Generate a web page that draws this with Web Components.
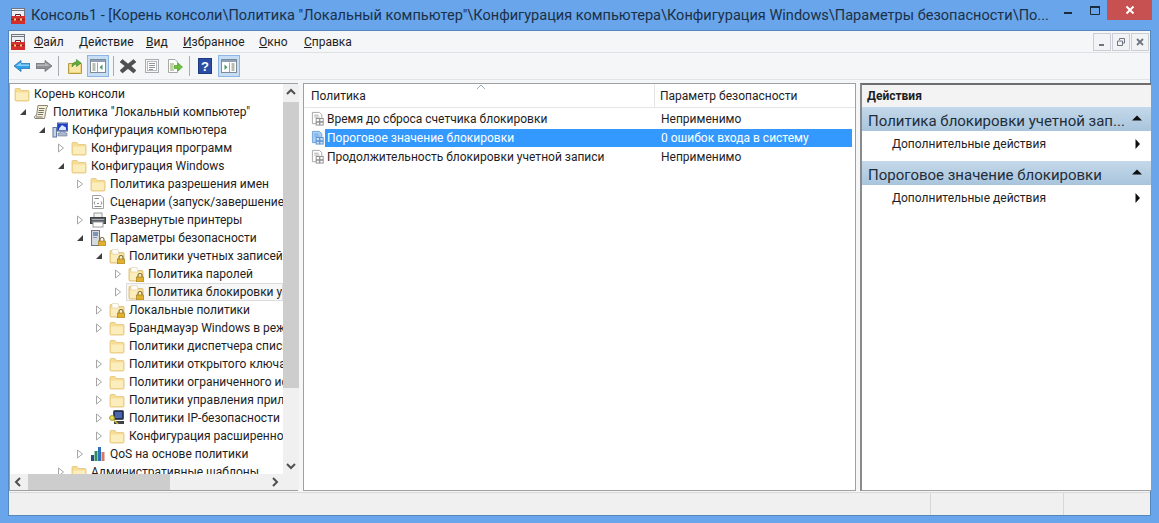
<!DOCTYPE html>
<html lang="ru">
<head>
<meta charset="utf-8">
<title>Консоль1</title>
<style>
  html, body { margin: 0; height: 100%; background: #68a5ea; overflow: hidden; }
  body { font-family: Roboto, "Open Sans", "Liberation Sans", sans-serif; font-size: 12px; color: #1e1e1e; }
</style>
</head>
<body>

<mmc-window>
  <mmc-titlebar slot="title">Консоль1 - [Корень консоли\Политика "Локальный компьютер"\Конфигурация компьютера\Конфигурация Windows\Параметры безопасности\По...</mmc-titlebar>
  <mmc-menubar slot="menu"></mmc-menubar>
  <mmc-toolbar slot="tools"></mmc-toolbar>

  <mmc-tree slot="tree">
    <tree-row level="0" icon="folder">Корень консоли</tree-row>
    <tree-row level="1" exp="open" icon="policy">Политика "Локальный компьютер"</tree-row>
    <tree-row level="2" exp="open" icon="computer">Конфигурация компьютера</tree-row>
    <tree-row level="3" exp="closed" icon="folder">Конфигурация программ</tree-row>
    <tree-row level="3" exp="open" icon="folder">Конфигурация Windows</tree-row>
    <tree-row level="4" exp="closed" icon="folder">Политика разрешения имен</tree-row>
    <tree-row level="4" icon="script">Сценарии (запуск/завершение)</tree-row>
    <tree-row level="4" exp="closed" icon="printer">Развернутые принтеры</tree-row>
    <tree-row level="4" exp="open" icon="server">Параметры безопасности</tree-row>
    <tree-row level="5" exp="open" icon="lockfolder">Политики учетных записей</tree-row>
    <tree-row level="6" exp="closed" icon="lockfolder">Политика паролей</tree-row>
    <tree-row level="6" exp="closed" icon="lockfolder" selected>Политика блокировки учетной записи</tree-row>
    <tree-row level="5" exp="closed" icon="lockfolder">Локальные политики</tree-row>
    <tree-row level="5" exp="closed" icon="folder">Брандмауэр Windows в режиме повышенной безопасности</tree-row>
    <tree-row level="5" icon="folder">Политики диспетчера списка сетей</tree-row>
    <tree-row level="5" exp="closed" icon="folder">Политики открытого ключа</tree-row>
    <tree-row level="5" exp="closed" icon="folder">Политики ограниченного использования программ</tree-row>
    <tree-row level="5" exp="closed" icon="folder">Политики управления приложениями</tree-row>
    <tree-row level="5" exp="closed" icon="ipsec">Политики IP-безопасности на "Локальный компьютер"</tree-row>
    <tree-row level="5" exp="closed" icon="folder">Конфигурация расширенной политики аудита</tree-row>
    <tree-row level="4" exp="closed" icon="qos">QoS на основе политики</tree-row>
    <tree-row level="3" exp="closed" icon="folder">Административные шаблоны</tree-row>
  </mmc-tree>

  <mmc-list slot="list">
    <list-row value="Неприменимо">Время до сброса счетчика блокировки</list-row>
    <list-row value="0 ошибок входа в систему" selected>Пороговое значение блокировки</list-row>
    <list-row value="Неприменимо">Продолжительность блокировки учетной записи</list-row>
  </mmc-list>

  <mmc-actions slot="actions">
    <action-group heading="Политика блокировки учетной зап..."></action-group>
    <action-group heading="Пороговое значение блокировки"></action-group>
  </mmc-actions>

  <mmc-status slot="status"></mmc-status>
</mmc-window>

<script>
// значки 16x16, всё нарисовано вручную
const FOLDER_BODY = `
  <path d="M1 3.5Q1 2.5 2 2.5H6L7.5 4.5H14Q15 4.5 15 5.5V14Q15 15 14 15H2Q1 15 1 14Z" fill="#f7dc93" stroke="#e2c47c" stroke-width=".8"/>
  <path d="M2 6.5H14V14H2Z" fill="#fcedbd"/>`;

const LOCK = `
  <path d="M10 11V9.5a2 2 0 0 1 4 0V11" fill="none" stroke="#7b6a35" stroke-width="1.1"/>
  <rect x="8.5" y="11" width="7" height="5" fill="#e2b02c" stroke="#94741a" stroke-width=".6"/>`;

const ICONS = {
  folder: FOLDER_BODY,
  lockfolder: `
    <path d="M1 3.5Q1 2.5 2 2.5H6L7.5 4.5H14Q15 4.5 15 5.5V14Q15 15 14 15H2Q1 15 1 14Z" fill="#f7dc93" stroke="#d8b96e" stroke-width=".8"/>
    <path d="M3 1.5H9L10 6H3Z" fill="#fffdf5" stroke="#cfc6a8" stroke-width=".5"/>
    <path d="M2 6.5H14V14H2Z" fill="#fcedbd"/>` + LOCK,
  policy: `
    <path d="M5 1.5H14.5Q15 3.5 13.5 3.5L11.5 14.5H2Q.5 13 2.5 11.5H3.5Z" fill="#f6f0d8" stroke="#8b8674"/>
    <path d="M6 4.5H11.5M5.6 6.5H11M5.2 8.5H10.6M4.8 10.5H10M3 13H9.5" stroke="#77766c"/>`,
  computer: `
    <rect x="5.5" y="1" width="10" height="8" fill="#fff" stroke="#53617f"/>
    <path d="M6 1.5H15V8.5H6Z" fill="#1c3fc4"/>
    <path d="M7 6.5L10 3 14 5.5V8H7Z" fill="#dce6fa"/>
    <rect x="1" y="5.5" width="3.5" height="9.5" fill="#c9d2df" stroke="#5f78a0"/>
    <path d="M8 9.5H13V11H15V14H6V11H8Z" fill="#a9b8cc" stroke="#6a7890" stroke-width=".6"/>`,
  script: `
    <path d="M2.5 1.5H11L13.5 4V14.5H2.5Z" fill="#fff" stroke="#a3a3a3"/>
    <path d="M4.5 4.5H9M5 7.5L4 9 5 10.5M11 7.5L12 9 11 10.5M7 9.5H9M4.5 12.5H11.5" stroke="#8c8c8c" fill="none"/>`,
  printer: `
    <rect x="4" y="1" width="8" height="5" fill="#f3f3f3" stroke="#9b9b9b"/>
    <rect x="0.5" y="5.5" width="15" height="6" fill="#5a5f66" stroke="#3c4045"/>
    <rect x="3" y="10" width="10" height="5" fill="#fff" stroke="#9b9b9b"/>
    <path d="M2 7.5H14" stroke="#a9adb3"/>`,
  server: `
    <rect x="1.5" y="0.5" width="8" height="15" fill="#d5dae0" stroke="#6c7683"/>
    <path d="M3 3H8M3 5H8" stroke="#2f4f86"/>
    <path d="M3 7.5H7" stroke="#8d97a3"/>` + LOCK,
  ipsec: `
    <rect x="4.5" y="0.5" width="10" height="9" rx="1" fill="#22305e" stroke="#4b4f58"/>
    <rect x="6" y="2" width="7" height="6" fill="#4a64a8"/>
    <path d="M5 11H15V14H5Z" fill="#3f4248"/>
    <circle cx="3" cy="8" r="2.4" fill="#e9dd52" stroke="#a59b2d"/>
    <path d="M4 9.5L9 14" stroke="#c8bb36" stroke-width="1.6"/>`,
  qos: `
    <rect x="1" y="9" width="3" height="6" fill="#234f84"/>
    <rect x="4.5" y="5" width="3" height="10" fill="#2f8f57"/>
    <rect x="8" y="1" width="3" height="14" fill="#2e6fbf"/>
    <rect x="11.5" y="6" width="3" height="9" fill="#d47a68"/>`,
  setting: `
    <path d="M1.5 1.5H9L11.5 4V13.5H1.5Z" fill="#fff" stroke="#a5a5a5"/>
    <path d="M3.5 4.5H8M3.5 6.5H9" stroke="#a5a5a5"/>
    <rect x="5.5" y="8" width="3.5" height="3.5" fill="#fff" stroke="#8f8f8f"/>
    <rect x="9.5" y="8" width="3.5" height="3.5" fill="#fff" stroke="#8f8f8f"/>
    <rect x="5.5" y="12" width="3.5" height="3" fill="#fff" stroke="#8f8f8f"/>
    <rect x="9.5" y="12" width="3.5" height="3" fill="#fff" stroke="#8f8f8f"/>`,
  settingSel: `
    <path d="M1.5 1.5H9L11.5 4V13.5H1.5Z" fill="#a9cdf3" stroke="#6ea3dc"/>
    <path d="M3.5 4.5H8M3.5 6.5H9" stroke="#6ea3dc"/>
    <rect x="5.5" y="8" width="3.5" height="3.5" fill="#cfe3f8" stroke="#5b93d2"/>
    <rect x="9.5" y="8" width="3.5" height="3.5" fill="#cfe3f8" stroke="#5b93d2"/>
    <rect x="5.5" y="12" width="3.5" height="3" fill="#cfe3f8" stroke="#5b93d2"/>
    <rect x="9.5" y="12" width="3.5" height="3" fill="#cfe3f8" stroke="#5b93d2"/>`,
  // значок приложения: красный чемодан на фоне окна
  app: `
    <rect x="1.5" y="0.5" width="13" height="9" fill="#eceff3" stroke="#6f7680"/>
    <path d="M2 2.5H14" stroke="#6f7680"/>
    <path d="M1 8H15V16H1Z" fill="#d32d2d"/>
    <path d="M5.5 8V6.5H10.5V8" fill="none" stroke="#6d1f1f"/>
    <path d="M1 11.5H15" stroke="#9c1d1d"/>
    <rect x="4" y="10.5" width="2" height="2" fill="#f3d36a"/>
    <rect x="10" y="10.5" width="2" height="2" fill="#f3d36a"/>`,
  back: `<path d="M0 8L7 2.5V5.5H16V10.5H7V13.5Z" fill="#2f9fe6" stroke="#2a78b8" stroke-width=".8"/><path d="M2 8L7 4.5V6.5H15V8Z" fill="#8fd2f7"/>`,
  forward: `<path d="M16 8L9 2.5V5.5H0V10.5H9V13.5Z" fill="#8d8f91" stroke="#6f7173" stroke-width=".8"/><path d="M1 6.5H9V4.5L14 8H1Z" fill="#b5b7b9"/>`,
  up: `
    <path d="M1.5 5.5H14.5V15.5H1.5Z" fill="#f2d67c" stroke="#b69a45"/>
    <path d="M3 7H13V14H3Z" fill="#f9e7a8"/>
    <path d="M5 9C5 5 7 4 9.5 4V1.5L14 5 9.5 8.5V6C8 6 6.5 7 5 9Z" fill="#5fae3a" stroke="#3d7f24" stroke-width=".6"/>`,
  delete: `<path d="M2.5 1.5L8 6 13.5 1.5 16 4 11 8 16 12.5 13.5 15 8 10.5 2.5 15 0 12.5 5 8 0 4Z" fill="#4f4f4f" stroke="#3a3a3a" stroke-width=".5"/>`,
  props: `
    <rect x="1.5" y="1.5" width="13" height="13" fill="#f6f6f6" stroke="#a8acb0"/>
    <rect x="3.5" y="3.5" width="9" height="9" fill="#fff" stroke="#b4b8bc"/>
    <path d="M5 5.5H11M5 7.5H11M5 9.5H11M5 11.5H9" stroke="#8f9498"/>`,
  export: `
    <path d="M1.5 1.5H8L10.5 4V14.5H1.5Z" fill="#fff" stroke="#a8a8a8"/>
    <path d="M3 6H7M3 8H6M3 10H6M3 12H7" stroke="#82a052"/>
    <path d="M7 7.5H11V5L15.5 9 11 13V10.5H7Z" fill="#70c040" stroke="#4b9426" stroke-width=".6"/>`,
  help: `<rect x="1.5" y="0.5" width="13" height="15" fill="#2a4da6" stroke="#1f3a80"/><text x="8" y="13" text-anchor="middle" font-family="Liberation Sans, sans-serif" font-weight="700" font-size="13" fill="#fff">?</text>`,
  paneLeft: `
    <rect x="0.5" y="1.5" width="15" height="13" fill="#fff" stroke="#7f8a96"/>
    <rect x="1" y="2" width="14" height="2" fill="#8da0b5"/>
    <path d="M2.5 6H5.5M2.5 8H5.5M2.5 10H5.5M2.5 12H5.5" stroke="#6b7f60"/>
    <path d="M7.5 4.5V14" stroke="#9aa6b2"/>
    <path d="M12.5 6.5V12L9.5 9.2Z" fill="#4b9a6a"/>`,
  paneRight: `
    <rect x="0.5" y="1.5" width="15" height="13" fill="#fff" stroke="#7f8a96"/>
    <rect x="1" y="2" width="14" height="2" fill="#8da0b5"/>
    <path d="M10.5 6H13.5M10.5 8H13.5M10.5 10H13.5M10.5 12H13.5" stroke="#6b7f60"/>
    <path d="M8.5 4.5V14" stroke="#9aa6b2"/>
    <path d="M3.5 6.5V12L6.5 9.2Z" fill="#4b9a6a"/>`
};

const svg = (name, size = 16) =>
  `<svg width="${size}" height="${size}" viewBox="0 0 16 16" aria-hidden="true" style="display:block;flex:none">${ICONS[name]}</svg>`;

class MmcWindow extends HTMLElement {
  constructor() {
    super();
    this.attachShadow({ mode: 'open' }).innerHTML = `
      <style>
        :host { display: flex; flex-direction: column; width: 1159px; height: 523px; box-sizing: border-box; }
        .client { flex: 1; display: flex; flex-direction: column; margin: 0 8px 7px; background: #f5f6f7;
                  border: 1px solid #5586bd; min-height: 0; }
        .panes { flex: none; height: 408px; display: flex; gap: 4px; margin: 3px 0 0 0; }
      </style>
      <slot name="title"></slot>
      <div class="client">
        <slot name="menu"></slot>
        <slot name="tools"></slot>
        <div class="panes">
          <slot name="tree"></slot>
          <slot name="list"></slot>
          <slot name="actions"></slot>
        </div>
        <slot name="status"></slot>
      </div>`;
  }
}

class MmcTitlebar extends HTMLElement {
  constructor() {
    super();
    this.attachShadow({ mode: 'open' }).innerHTML = `
      <style>
        :host { display: flex; align-items: flex-start; height: 30px; flex: none; color: #1b3048; }
        .ico { margin: 8px 5px 0 10px; }
        .text { flex: 1; font-size: 14.55px; line-height: 20px; margin-top: 6px; white-space: nowrap; overflow: hidden; }
        .btns { display: flex; align-items: flex-start; margin-right: 7px; }
        .b { width: 25px; height: 20px; display: flex; align-items: center; justify-content: center; }
        .min { margin-right: 2px; }
        .close { width: 45px; background: #c75050; }
      </style>
      <span class="ico">${svg('app')}</span>
      <span class="text"><slot></slot></span>
      <div class="btns">
        <div class="b min"><svg width="10" height="10"><path d="M1 8H9" stroke="#1d2c3a" stroke-width="2"/></svg></div>
        <div class="b"><svg width="10" height="10"><path d="M.5 2.5H9.5V9.5H.5Z" fill="none" stroke="#1d2c3a"/><path d="M0 2H10" stroke="#1d2c3a" stroke-width="2"/></svg></div>
        <div class="b close"><svg width="10" height="10"><path d="M1.5 1.5L8.5 8.5M8.5 1.5L1.5 8.5" stroke="#fff" stroke-width="2"/></svg></div>
      </div>`;
  }
}

class MmcMenubar extends HTMLElement {
  constructor() {
    super();
    const items = [['Ф', 'айл', 45], ['Д', 'ействие', 67], ['В', 'ид', 37], ['И', 'збранное', 76], ['О', 'кно', 45], ['С', 'правка', 60]];
    this.attachShadow({ mode: 'open' }).innerHTML = `
      <style>
        :host { display: flex; align-items: center; height: 22px; flex: none; background: #f5f6f7; box-sizing: border-box;
                border-bottom: 1px solid #dfe1e4; }
        .ico { margin: 0 8px 0 1px; }
        .m { flex: none; font-size: 12px; color: #1e1e1e; }
        .spacer { flex: 1; }
        .mdi { display: flex; gap: 1px; margin-right: 1px; align-self: flex-start; margin-top: 2px; }
        .mdi div { width: 18px; height: 18px; box-sizing: border-box; background: #f2f3f5; border: 1px solid #c9ced4;
                   display: flex; align-items: center; justify-content: center; }
      </style>
      <span class="ico">${svg('app')}</span>
      ${items.map(([a, b, w]) => `<span class="m" style="width:${w}px"><u>${a}</u>${b}</span>`).join('')}
      <span class="spacer"></span>
      <div class="mdi">
        <div><svg width="10" height="10"><path d="M2 8H7" stroke="#6d7680" stroke-width="2"/></svg></div>
        <div><svg width="10" height="10"><path d="M3.5 3V1.5H8.5V6H7M1.5 4H6.5V8.5H1.5Z" fill="none" stroke="#6d7680"/></svg></div>
        <div><svg width="10" height="10"><path d="M2 2L8 8M8 2L2 8" stroke="#6d7680" stroke-width="1.8"/></svg></div>
      </div>`;
  }
}

class MmcToolbar extends HTMLElement {
  constructor() {
    super();
    // [значок, ширина кнопки, отступ слева, подсвечена]
    const btn = (name, w, ml, on) => `<span class="t${on ? ' on' : ''}" style="width:${w}px;margin-left:${ml}px">${svg(name)}</span>`;
    const sep = (l, r) => `<span class="sep" style="margin:0 ${r}px 0 ${l}px"></span>`;
    this.attachShadow({ mode: 'open' }).innerHTML = `
      <style>
        :host { display: flex; align-items: center; height: 27px; flex: none; background: #f5f6f7; padding-left: 2px;
                border-bottom: 1px solid #e3e4e6; box-sizing: border-box; }
        .t { height: 22px; display: flex; align-items: center; justify-content: center; box-sizing: border-box; flex: none; }
        .on { background: #c6ddf6; border: 1px solid #8fb6e2; }
        .sep { width: 1px; height: 20px; background: #a9adb2; flex: none; }
      </style>
      ${btn('back', 22, 0)}${btn('forward', 22, 0)}${sep(3, 6)}${btn('up', 20, 0)}${btn('paneLeft', 22, 2, true)}${sep(4, 4)}
      ${btn('delete', 20, 0)}${btn('props', 24, 2)}${btn('export', 22, 0)}${sep(3, 4)}${btn('help', 22, 0)}${btn('paneRight', 22, 2, true)}`;
  }
}

class MmcTree extends HTMLElement {
  constructor() {
    super();
    this.attachShadow({ mode: 'open' }).innerHTML = `
      <style>
        :host { display: grid; grid-template-columns: 273px 16px; grid-template-rows: 1fr 16px; width: 289px; flex: none;
                background: #fff; border: 1px solid #a0a0a0; border-width: 1px 0 1px 1px; box-sizing: border-box; height: 408px;
                margin-right: 1px; }
        .rows { overflow: hidden; padding-top: 1px; box-sizing: border-box; min-height: 0; }
        .v { background: #f0f0f0; display: flex; flex-direction: column; align-items: center; min-height: 0; }
        .h { background: #f0f0f0; display: flex; align-items: center; }
        .corner { background: #f0f0f0; }
        .arr { height: 16px; width: 16px; flex: none; display: flex; align-items: center; justify-content: center; }
        .vthumb { width: 16px; height: 286px; background: #cdcdcd; flex: none; margin-top: 2px; }
        .vspace { flex: 1; }
        .hthumb { width: 142px; height: 16px; background: #cdcdcd; flex: none; margin-left: 2px; }
        .hspace { flex: 1; }
      </style>
      <div class="rows"><slot></slot></div>
      <div class="v">
        <div class="arr"><svg width="10" height="10"><path d="M1 7L5 3 9 7" fill="none" stroke="#505050" stroke-width="2"/></svg></div>
        <div class="vthumb"></div><div class="vspace"></div>
        <div class="arr"><svg width="10" height="10"><path d="M1 3L5 7 9 3" fill="none" stroke="#505050" stroke-width="2"/></svg></div>
      </div>
      <div class="h">
        <div class="arr"><svg width="10" height="10"><path d="M7 1L3 5 7 9" fill="none" stroke="#505050" stroke-width="2"/></svg></div>
        <div class="hthumb"></div><div class="hspace"></div>
        <div class="arr"><svg width="10" height="10"><path d="M3 1L7 5 3 9" fill="none" stroke="#505050" stroke-width="2"/></svg></div>
      </div>
      <div class="corner"></div>`;
  }
}

class TreeRow extends HTMLElement {
  constructor() {
    super();
    const level = Number(this.getAttribute('level') || 0);
    const exp = this.getAttribute('exp');
    const glyph = exp === 'open'
      ? '<svg width="8" height="8"><path d="M7 1V7H1Z" fill="#404040"/></svg>'
      : exp === 'closed'
        ? '<svg width="8" height="10"><path d="M1.5 1L6.5 5 1.5 9Z" fill="#fff" stroke="#a6a6a6"/></svg>'
        : '';
    this.attachShadow({ mode: 'open' }).innerHTML = `
      <style>
        :host { display: flex; align-items: center; height: 18px; white-space: nowrap; }
        .exp { width: 10px; flex: none; display: flex; justify-content: center; margin: 0 3px 0 -5px; }
        .ico { margin: 0 4px 0 2px; flex: none; }
        .label { flex: 1; min-width: 0; overflow: hidden; }
        .body { display: flex; align-items: center; height: 18px; flex: 1; min-width: 0; box-sizing: border-box; }
        :host([selected]) .body { background: #f7f7f7; outline: 1px solid #dcdcdc; outline-offset: -1px; }
      </style>
      <span style="flex:none;margin-left:${level * 19 - 6}px"></span>
      <span class="exp">${glyph}</span>
      <div class="body">
        <span class="ico">${svg(this.getAttribute('icon') || 'folder')}</span>
        <span class="label"><slot></slot></span>
      </div>`;
  }
}

class MmcList extends HTMLElement {
  constructor() {
    super();
    this.attachShadow({ mode: 'open' }).innerHTML = `
      <style>
        :host { display: block; width: 553px; flex: none; background: #fff; border: 1px solid #a0a0a0; box-sizing: border-box; height: 408px; }
        .head { display: flex; height: 24px; align-items: center; border-bottom: 1px solid #e5e5e5; position: relative; box-sizing: border-box; }
        .c1 { width: 351px; padding-left: 7px; box-sizing: border-box; border-right: 1px solid #e5e5e5; height: 100%; display: flex; align-items: center; }
        .c2 { padding-left: 5px; }
        .sort { position: absolute; left: 173px; top: 1px; }
        .rows { padding-top: 1px; }
      </style>
      <div class="head">
        <span class="c1">Политика</span><span class="c2">Параметр безопасности</span>
        <svg class="sort" width="8" height="5"><path d="M0 4L4 0 8 4" fill="none" stroke="#9db3c8"/></svg>
      </div>
      <div class="rows"><slot></slot></div>`;
  }
}

class ListRow extends HTMLElement {
  constructor() {
    super();
    const sel = this.hasAttribute('selected');
    this.attachShadow({ mode: 'open' }).innerHTML = `
      <style>
        :host { display: flex; height: 19px; align-items: center; padding-left: 7px; padding-right: 3px; white-space: nowrap; }
        .ico { flex: none; width: 14px; }
        .body { flex: 1; display: flex; height: 18px; align-items: center; padding-left: 2px; }
        .n { width: 334px; flex: none; }
        :host([selected]) .body { background: #3399ff; color: #fff; }
      </style>
      <span class="ico">${svg(sel ? 'settingSel' : 'setting', 15)}</span>
      <div class="body"><span class="n"><slot></slot></span><span>${this.getAttribute('value')}</span></div>`;
  }
}

class MmcActions extends HTMLElement {
  constructor() {
    super();
    this.attachShadow({ mode: 'open' }).innerHTML = `
      <style>
        :host { display: block; width: 291px; flex: none; background: #fff; height: 408px; box-sizing: border-box;
                border: 1px solid #a0a0a0; border-top: 2px solid #6d6d6d; border-left: 2px solid #8a8a8a; border-right: 0; }
        .head { height: 22px; background: #f3f3f3; font-weight: 700; display: flex; align-items: center; padding-left: 5px; box-sizing: border-box; }
      </style>
      <div class="head">Действия</div>
      <slot></slot>`;
  }
}

class ActionGroup extends HTMLElement {
  constructor() {
    super();
    this.attachShadow({ mode: 'open' }).innerHTML = `
      <style>
        :host { display: block; margin-bottom: 5px; }
        .h { height: 24px; box-sizing: border-box; padding: 3px 9px 0 6px; display: flex; align-items: center; justify-content: space-between;
             font-size: 15px; color: #1f2d3a; background: linear-gradient(#c4d8e9, #a8c5dd); white-space: nowrap; }
        .h svg { margin-top: -5px; }
        .i { height: 25px; display: flex; align-items: center; justify-content: space-between; padding: 0 10px 0 30px; }
      </style>
      <div class="h"><span>${this.getAttribute('heading')}</span>
        <svg width="10" height="6"><path d="M0 5.5L5 .5 10 5.5Z" fill="#101010"/></svg></div>
      <div class="i"><span>Дополнительные действия</span>
        <svg width="6" height="10"><path d="M.5 0L5 5 .5 10Z" fill="#101010"/></svg></div>`;
  }
}

class MmcStatus extends HTMLElement {
  constructor() {
    super();
    this.attachShadow({ mode: 'open' }).innerHTML = `
      <style>
        :host { display: flex; flex: 1; margin-top: 1px; background: #f0f0f0; border-top: 1px solid #d9d9d9; }
        div { border-right: 1px solid #d8d8d8; box-sizing: border-box; }
        .a { width: 922px; } .b { width: 133px; } .c { flex: 1; border-right: 0; }
      </style>
      <div class="a"></div><div class="b"></div><div class="c"></div>`;
  }
}

customElements.define('mmc-window', MmcWindow);
customElements.define('mmc-titlebar', MmcTitlebar);
customElements.define('mmc-menubar', MmcMenubar);
customElements.define('mmc-toolbar', MmcToolbar);
customElements.define('mmc-tree', MmcTree);
customElements.define('tree-row', TreeRow);
customElements.define('mmc-list', MmcList);
customElements.define('list-row', ListRow);
customElements.define('mmc-actions', MmcActions);
customElements.define('action-group', ActionGroup);
customElements.define('mmc-status', MmcStatus);
</script>
</body>
</html>
